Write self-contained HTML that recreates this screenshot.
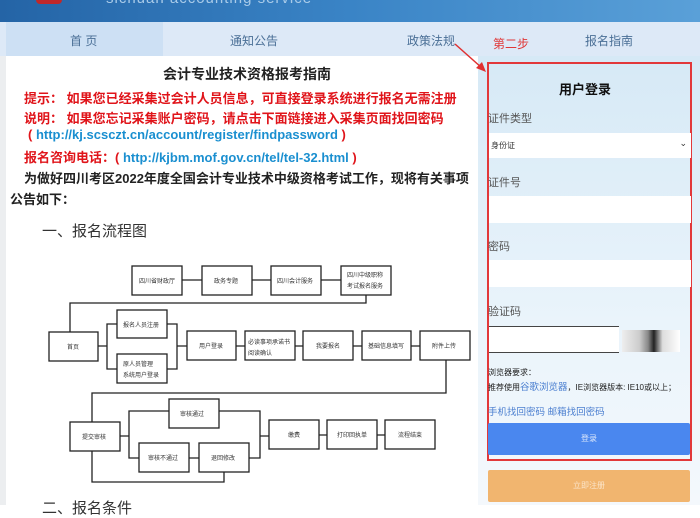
<!DOCTYPE html><html><head><meta charset="utf-8"><style>
*{margin:0;padding:0;box-sizing:border-box}
body{width:700px;height:505px;overflow:hidden;background:#fff;font-family:"Liberation Sans","Noto Sans CJK SC",sans-serif;position:relative}
.a{position:absolute;white-space:nowrap}
</style></head><body>
<div class="a" style="left:0;top:0;width:700px;height:22px;background:linear-gradient(90deg,#2464a6,#3a84c6 50%,#5aa0d8)"></div>
<div class="a" style="left:36px;top:0;width:26px;height:4px;background:#c0282a;border-radius:0 0 6px 6px"></div>
<div class="a" style="left:106px;top:-10px;color:#a9cbe9;font-size:15px;letter-spacing:1px">sichuan accounting service</div>
<div class="a" style="left:0;top:22px;width:700px;height:34px;background:#dde9f7"></div>
<div class="a" style="left:6px;top:22px;width:157px;height:34px;background:#cde0f4"></div>
<div class="a" style="left:70px;top:32px;font-size:12px;color:#4a6f96">首 页</div>
<div class="a" style="left:230px;top:32px;font-size:12px;color:#4a6f96">通知公告</div>
<div class="a" style="left:407px;top:32px;font-size:12px;color:#4a6f96">政策法规</div>
<div class="a" style="left:493px;top:35px;font-size:12px;color:#e03838">第二步</div>
<div class="a" style="left:585px;top:32px;font-size:12px;color:#4a6f96">报名指南</div>
<div class="a" style="left:0;top:56px;width:6px;height:449px;background:#eceef0"></div>
<div class="a" style="left:478px;top:56px;width:222px;height:449px;background:linear-gradient(180deg,#d6e9f6,#eaf4fb 60%,#f4f8fc)"></div>
<svg class="a" style="left:0;top:0" width="700" height="505"><line x1="455" y1="44" x2="482" y2="68" stroke="#e03030" stroke-width="1.5"/><polygon points="486,72 476,68 482,62" fill="#e03030"/></svg>
<div class="a" style="left:163px;top:64px;font-size:14px;font-weight:bold;color:#222">会计专业技术资格报考指南</div>
<div class="a" style="left:24px;top:88px;font-size:13px;font-weight:bold;color:#e0141a">提示： 如果您已经采集过会计人员信息，可直接登录系统进行报名无需注册</div>
<div class="a" style="left:24px;top:108px;font-size:13px;font-weight:bold;color:#e0141a">说明： 如果您忘记采集账户密码，请点击下面链接进入采集页面找回密码</div>
<div class="a" style="left:28px;top:127px;font-size:13px;font-weight:bold;color:#e0141a">( <span style="color:#1a8fd0">http://kj.scsczt.cn/account/register/findpassword</span> )</div>
<div class="a" style="left:24px;top:147px;font-size:13px;font-weight:bold;color:#e0141a">报名咨询电话：( <span style="color:#1a8fd0">http://kjbm.mof.gov.cn/tel/tel-32.html</span> )</div>
<div class="a" style="left:24px;top:168px;font-size:13px;font-weight:bold;color:#222">为做好四川考区2022年度全国会计专业技术中级资格考试工作，现将有关事项</div>
<div class="a" style="left:10px;top:189px;font-size:13px;font-weight:bold;color:#222">公告如下：</div>
<div class="a" style="left:42px;top:220px;font-size:15px;color:#333">一、报名流程图</div>
<div class="a" style="left:42px;top:497px;font-size:15px;color:#333">二、报名条件</div>
<svg class="a" style="left:0;top:0" width="480" height="505" font-size="6" font-family="Liberation Sans,Noto Sans CJK SC,sans-serif" fill="none" stroke="#222" stroke-width="1.3">
<g>
<path d="M182 280H202M252 280H271M321 280H341M366 295V303H70V332M98 346H107V324H117M107 346V369H117M167 324H177V369H167M177 346H187M236 346H245M295 346H303M353 346H362M411 346H420M446 360V393H92V422M120 436H129V411H169M129 436V458H139M219 411H260V458H249M189 458H199M260 436H269M319 435H327M377 435H385M92 451V482H224V472"/>
<rect x="132" y="266" width="50" height="29"/><rect x="202" y="266" width="50" height="29"/><rect x="271" y="266" width="50" height="29"/><rect x="341" y="266" width="50" height="29"/>
<rect x="49" y="332" width="49" height="29"/><rect x="117" y="310" width="50" height="28"/><rect x="117" y="354" width="50" height="29"/>
<rect x="187" y="331" width="49" height="29"/><rect x="245" y="331" width="50" height="29"/><rect x="303" y="331" width="50" height="29"/><rect x="362" y="331" width="49" height="29"/><rect x="420" y="331" width="50" height="29"/>
<rect x="70" y="422" width="50" height="29"/><rect x="169" y="399" width="50" height="29"/><rect x="139" y="443" width="50" height="29"/><rect x="199" y="443" width="50" height="29"/>
<rect x="269" y="420" width="50" height="29"/><rect x="327" y="420" width="50" height="29"/><rect x="385" y="420" width="50" height="29"/>
</g>
<g fill="#333" stroke="none">
<text x="139" y="283">四川省财政厅</text><text x="214" y="283">政务专题</text><text x="277" y="283">四川会计服务</text><text x="347" y="277">四川中级职称</text><text x="347" y="288">考试报名服务</text>
<text x="67" y="349">首页</text><text x="123" y="327">报名人员注册</text><text x="123" y="366">原人员管理</text><text x="123" y="377">系统用户登录</text>
<text x="199" y="348">用户登录</text><text x="248" y="344">必读事项承诺书</text><text x="248" y="355">阅读确认</text><text x="316" y="348">我要报名</text><text x="368" y="348">基础信息填写</text><text x="432" y="348">附件上传</text>
<text x="82" y="439">提交审核</text><text x="180" y="416">审核通过</text><text x="148" y="460">审核不通过</text><text x="211" y="460">退回修改</text>
<text x="288" y="437">缴费</text><text x="337" y="437">打印回执单</text><text x="398" y="437">流程结束</text>
</g></svg>
<div class="a" style="left:487px;top:62px;width:205px;height:399px;border:2px solid #e2383a"></div>
<div class="a" style="left:559px;top:79px;font-size:13px;font-weight:bold;color:#111">用户登录</div>
<div class="a" style="left:488px;top:110px;font-size:11px;color:#555">证件类型</div>
<div class="a" style="left:489px;top:133px;width:202px;height:25px;background:#fff;font-size:8px;color:#333;padding:7px 2px">身份证<span style="position:absolute;right:4px;top:5px;font-size:9px">⌄</span></div>
<div class="a" style="left:488px;top:174px;font-size:11px;color:#555">证件号</div>
<div class="a" style="left:489px;top:196px;width:202px;height:27px;background:#fff"></div>
<div class="a" style="left:488px;top:238px;font-size:11px;color:#555">密码</div>
<div class="a" style="left:489px;top:260px;width:202px;height:27px;background:#fff"></div>
<div class="a" style="left:488px;top:303px;font-size:11px;color:#555">验证码</div>
<div class="a" style="left:489px;top:326px;width:130px;height:27px;background:#fff;border-top:1px solid #444;border-bottom:1px solid #444"></div>
<div class="a" style="left:622px;top:330px;width:58px;height:22px;background:linear-gradient(90deg,#eee,#ccc 30%,#888 45%,#222 55%,#ddd 70%,#fff)"></div>
<div class="a" style="left:488px;top:367px;font-size:8px;color:#222">浏览器要求：</div>
<div class="a" style="left:488px;top:379px;font-size:8px;color:#222">推荐使用<span style="color:#4b7fd0;font-size:9.5px">谷歌浏览器</span>，IE浏览器版本: IE10或以上；</div>
<div class="a" style="left:488px;top:404px;font-size:9.5px;color:#4b7fd0">手机找回密码 邮箱找回密码</div>
<div class="a" style="left:488px;top:423px;width:202px;height:32px;background:#4a87ef;border-radius:2px;color:#dfe9fb;font-size:8px;text-align:center;line-height:32px">登录</div>
<div class="a" style="left:488px;top:470px;width:202px;height:32px;background:#f1b56f;border-radius:2px;color:#fbe4c8;font-size:8px;text-align:center;line-height:32px">立即注册</div>
</body></html>
